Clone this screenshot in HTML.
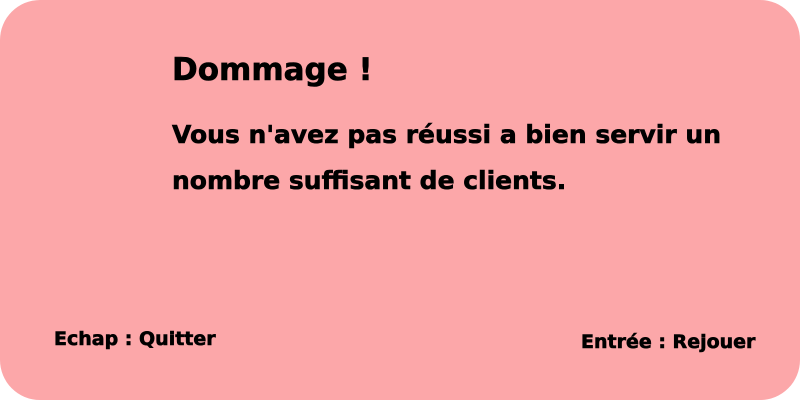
<!DOCTYPE html>
<html><head><meta charset="utf-8"><style>
html,body{margin:0;padding:0;width:800px;height:400px;background:#fff;overflow:hidden}
.card{position:absolute;left:0;top:0;width:800px;height:400px;background:#fca7a9;border-radius:40px}
.t{position:absolute;font-family:"DejaVu Sans",sans-serif;font-weight:bold;color:#000;white-space:nowrap;-webkit-text-stroke:0.6px #000}
</style></head><body>
<div class="card"></div>
<div class="t" style="left:172px;top:52px;font-size:31px">Dommage !</div>
<div class="t" style="left:172px;top:120px;font-size:25px">Vous n'avez pas réussi a bien servir un</div>
<div class="t" style="left:172px;top:166px;font-size:25px">nombre suffisant de clients.</div>
<div class="t" style="left:54px;top:328px;font-size:19px">Echap : Quitter</div>
<div class="t" style="left:581px;top:331px;font-size:19px">Entrée : Rejouer</div>
</body></html>
